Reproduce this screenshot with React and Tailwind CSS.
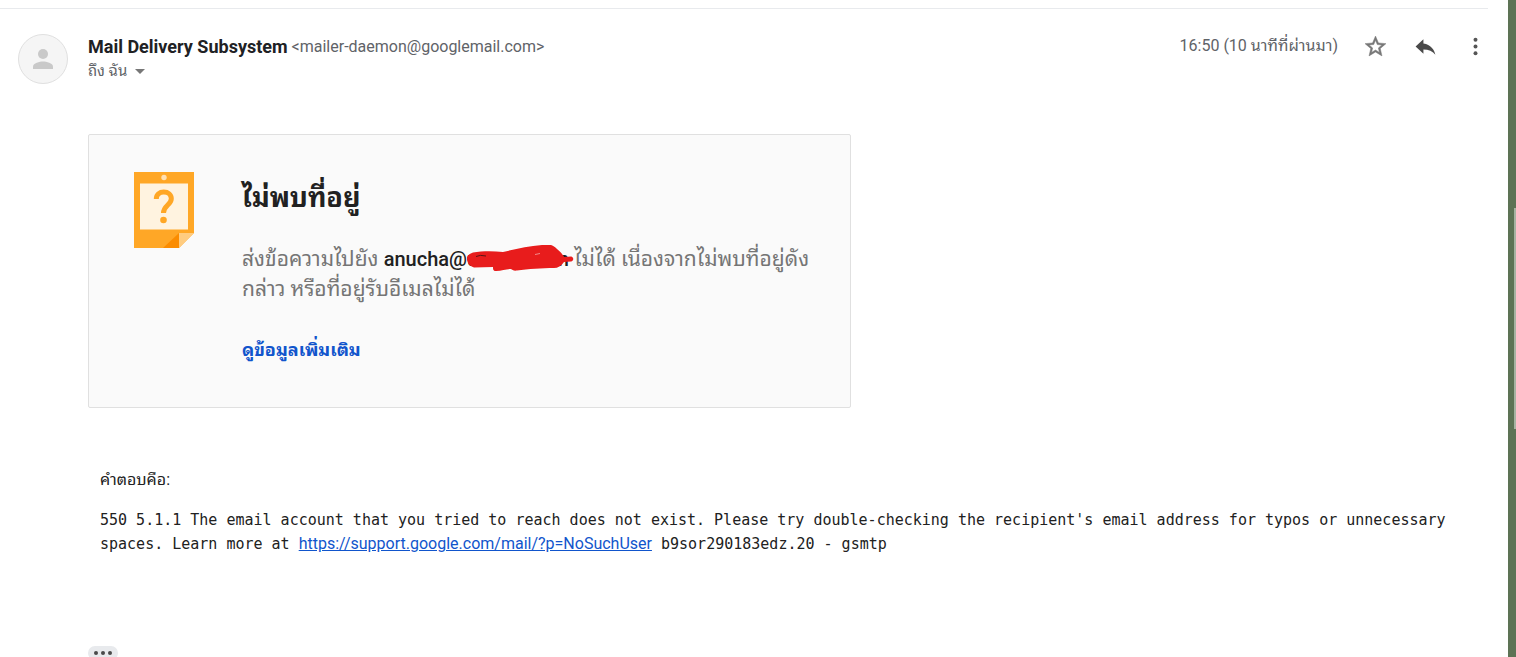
import React from 'react';

function Avatar() {
  return (
    <div className="flex h-[50px] w-[50px] shrink-0 items-center justify-center rounded-full border border-[#e0e0e0] bg-[#f5f5f5]">
      <svg className="h-[30px] w-[30px]" viewBox="0 0 24 24" fill="#c9c9c9" aria-hidden="true">
        <circle cx="12" cy="8" r="4" />
        <path d="M12 14c-2.67 0-8 1.34-8 4v2h16v-2c0-2.66-5.33-4-8-4z" />
      </svg>
    </div>
  );
}

function MessageHeader() {
  return (
    <header className="flex gap-5 pl-[18px] pt-[25px]">
      <Avatar />
      <div className="min-w-0 flex-1">
        <div className="flex h-[25px] items-center gap-1">
          <h3 className="text-lg font-bold text-[#202124]">Mail Delivery Subsystem</h3>
          <span className="text-base text-[#5f6368]">&lt;mailer-daemon@googlemail.com&gt;</span>
        </div>
        <button type="button" className="flex h-6 items-center gap-2 text-[15px] text-[#5f6368]">
          ถึง ฉัน
          <svg className="h-[5px] w-[10px]" viewBox="0 0 10 5" fill="#777777" aria-hidden="true">
            <path d="M0 0h10L5 5z" />
          </svg>
        </button>
      </div>
      <div className="flex h-6 items-center">
        <time className="mr-[25px] text-base text-[#5f6368]">16:50 (10 นาทีที่ผ่านมา)</time>
        <button type="button" aria-label="Star" className="mr-[25px]">
          <svg className="h-[25px] w-[25px]" viewBox="0 0 24 24" fill="#777777" stroke="#777777" strokeWidth="0.5">
            <path d="M22 9.24l-7.19-.62L12 2 9.19 8.63 2 9.24l5.46 4.73L5.82 21 12 17.27 18.18 21l-1.63-7.03L22 9.24zM12 15.4l-3.76 2.27 1-4.28-3.32-2.88 4.38-.38L12 6.1l1.71 4.04 4.38.38-3.32 2.88 1 4.28L12 15.4z" />
          </svg>
        </button>
        <button type="button" aria-label="Reply" className="mr-[25px]">
          <svg className="h-[25px] w-[25px]" viewBox="0 0 24 24" fill="#4a4a4a">
            <path d="M10 9V5l-7.500 7 7.500 7v-4.100c5 0 9 1.600 11.500 5.100-1-5-4.500-10-11.500-11z" />
          </svg>
        </button>
        <button type="button" aria-label="More">
          <svg className="h-[25px] w-[25px]" viewBox="0 0 24 24" fill="#555555">
            <circle cx="12" cy="5.500" r="1.900" />
            <circle cx="12" cy="12" r="1.900" />
            <circle cx="12" cy="18.500" r="1.900" />
          </svg>
        </button>
      </div>
    </header>
  );
}

function NotFoundIcon() {
  return (
    <svg className="h-[77px] w-[60px] shrink-0" viewBox="0 0 60 77" aria-hidden="true">
      <path d="M0 0h60v61L45 76H0z" fill="#ffa726" />
      <path d="M6 11.500h48v46H6z" fill="#fff3e0" />
      <circle cx="30" cy="5.500" r="2.700" fill="#ffe0b2" />
      <path d="M45 61v15H29z" fill="#fb8c00" />
      <path d="M45 61h15L45 76z" fill="#ffcc80" />
      <path d="M22.300 27c0-4.500 3.200-7 7.500-7s7.500 2.600 7.500 6.800c0 6-7.800 6.700-7.800 14.200" fill="none" stroke="#ffa726" strokeWidth="5" />
      <circle cx="29.500" cy="48" r="3.300" fill="#ffa726" />
    </svg>
  );
}

function RedactedAddress() {
  return (
    <b className="text-xl font-medium text-[#212121]">
      anucha@
      <span className="relative inline-flex w-[102px] justify-between">
        <span>u</span>
        <span>n</span>
        <svg className="absolute left-0 top-0 h-[30px] w-[108px]" viewBox="0 0 108 30" aria-hidden="true">
          <path
            d="M0 15C-1 11 2 9 6 7.500C15 6 26 6 36 7C49 4 61 1 75 0C83-2 87 1 90 4C94 7 96 10 97 12L104 11.500C107 12 107 16 104 16.500L97 17C94 21 91 23 87 23C75 23 61 24 50 25.500C47 26 45 25 44 24C39 24 35 26 29 26C26 26 26 24 26 22L7 22.500C2 21 1 18 0 15z"
            fill="#e81c1c"
          />
          <path d="M9 11.500Q13 9.500 19 11" fill="none" stroke="#5a1414" />
          <path d="M68 9.500L73 8.500" fill="none" stroke="#f08a8a" />
        </svg>
      </span>
    </b>
  );
}

function NoticeCard() {
  return (
    <section className="ml-[88px] mt-[50px] flex w-full max-w-[763px] gap-12 rounded-[2px] border border-[#e0e0e0] bg-[#fafafa] pb-[43px] pl-[45px] pr-9 pt-[37px]">
      <NotFoundIcon />
      <div className="min-w-0 flex-1">
        <h2 className="mt-[10px] text-[27px] leading-8 font-bold text-[#212121]">ไม่พบที่อยู่</h2>
        <p className="mt-[30px] text-[21px] leading-[30px] text-[#757575]">
          ส่งข้อความไปยัง <RedactedAddress /> ไม่ได้ เนื่องจากไม่พบที่อยู่ดัง
          <br />
          กล่าว หรือที่อยู่รับอีเมลไม่ได้
        </p>
        <a href="#details" className="mt-8 block text-lg leading-7 font-bold text-[#1155cc]">
          ดูข้อมูลเพิ่มเติม
        </a>
      </div>
    </section>
  );
}

function Response() {
  return (
    <section className="ml-[100px] mt-[60px] text-[#212121]">
      <p className="text-base leading-6">คำตอบคือ:</p>
      <p className="mt-4 font-['DejaVu_Sans_Mono',monospace] text-[15px] leading-6">
        550 5.1.1 The email account that you tried to reach does not exist. Please try double-checking the recipient's email address for typos or unnecessary
        <br />
        spaces. Learn more at{' '}
        <a href="#NoSuchUser" className="font-[Roboto,sans-serif] text-base text-[#1155cc] underline">
          https://support.google.com/mail/?p=NoSuchUser
        </a>{' '}
        b9sor290183edz.20 - gsmtp
      </p>
    </section>
  );
}

export default function App() {
  return (
    <div className="flex h-screen overflow-hidden bg-white font-[Roboto,'Noto_Sans_Thai_Looped','Noto_Sans_Thai',sans-serif]">
      <main className="min-w-0 flex-1 overflow-hidden pr-5 pt-2">
        <div className="h-px bg-[#e8eaed]" />
        <MessageHeader />
        <NoticeCard />
        <Response />
        <button
          type="button"
          aria-label="Show trimmed content"
          className="ml-[88px] mt-[90px] flex h-[14px] w-[30px] items-center justify-center gap-[3px] rounded-full bg-[#e8eaed]"
        >
          <span className="h-1 w-1 rounded-full bg-[#4a4a4a]" />
          <span className="h-1 w-1 rounded-full bg-[#4a4a4a]" />
          <span className="h-1 w-1 rounded-full bg-[#4a4a4a]" />
        </button>
      </main>
      <aside className="flex w-2 shrink-0 justify-end bg-[#5d7355]">
        <div className="mt-[208px] h-[221px] w-[2px] bg-[#a6b3a1]" />
      </aside>
    </div>
  );
}
